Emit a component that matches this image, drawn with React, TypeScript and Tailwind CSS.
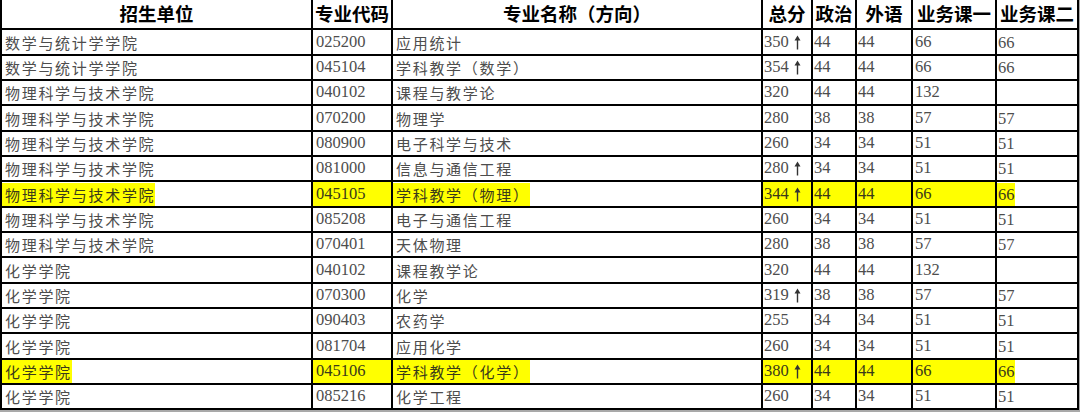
import React from 'react';

type Row = {
  unit: string;
  code: string;
  name: string;
  total: string;
  up?: boolean;
  pol: string;
  lang: string;
  c1: string;
  c2: string;
  hl?: boolean;
};

const rows: Row[] = [
  { unit: '数学与统计学学院', code: '025200', name: '应用统计', total: '350', up: true, pol: '44', lang: '44', c1: '66', c2: '66' },
  { unit: '数学与统计学学院', code: '045104', name: '学科教学（数学）', total: '354', up: true, pol: '44', lang: '44', c1: '66', c2: '66' },
  { unit: '物理科学与技术学院', code: '040102', name: '课程与教学论', total: '320', pol: '44', lang: '44', c1: '132', c2: '' },
  { unit: '物理科学与技术学院', code: '070200', name: '物理学', total: '280', pol: '38', lang: '38', c1: '57', c2: '57' },
  { unit: '物理科学与技术学院', code: '080900', name: '电子科学与技术', total: '260', pol: '34', lang: '34', c1: '51', c2: '51' },
  { unit: '物理科学与技术学院', code: '081000', name: '信息与通信工程', total: '280', up: true, pol: '34', lang: '34', c1: '51', c2: '51' },
  { unit: '物理科学与技术学院', code: '045105', name: '学科教学（物理）', total: '344', up: true, pol: '44', lang: '44', c1: '66', c2: '66', hl: true },
  { unit: '物理科学与技术学院', code: '085208', name: '电子与通信工程', total: '260', pol: '34', lang: '34', c1: '51', c2: '51' },
  { unit: '物理科学与技术学院', code: '070401', name: '天体物理', total: '280', pol: '38', lang: '38', c1: '57', c2: '57' },
  { unit: '化学学院', code: '040102', name: '课程教学论', total: '320', pol: '44', lang: '44', c1: '132', c2: '' },
  { unit: '化学学院', code: '070300', name: '化学', total: '319', up: true, pol: '38', lang: '38', c1: '57', c2: '57' },
  { unit: '化学学院', code: '090403', name: '农药学', total: '255', pol: '34', lang: '34', c1: '51', c2: '51' },
  { unit: '化学学院', code: '081704', name: '应用化学', total: '260', pol: '34', lang: '34', c1: '51', c2: '51' },
  { unit: '化学学院', code: '045106', name: '学科教学（化学）', total: '380', up: true, pol: '44', lang: '44', c1: '66', c2: '66', hl: true },
  { unit: '化学学院', code: '085216', name: '化学工程', total: '260', pol: '34', lang: '34', c1: '51', c2: '51' },
];

// row lines fall about every 25.3px, so rows go 26/25/25
const heights = ['h-[26px]', 'h-[25px]', 'h-[25px]'];

const cjk = "font-['Noto_Sans_CJK_SC',sans-serif]";
const num = "font-['Liberation_Serif','Noto_Sans_CJK_SC',serif]";

function UpArrow() {
  return (
    <svg width="7" height="15" viewBox="0 0 7 15" className="ml-[5px] shrink-0">
      <path d="M3.5 0.5 L6.5 5.5 L4.2 5.5 L4.2 14.5 L2.8 14.5 L2.8 5.5 L0.5 5.5 Z" fill="#333" />
    </svg>
  );
}

export default function App() {
  return (
    <div className="w-[1080px] h-[412px] bg-[#a9a9a9] overflow-hidden">
      <div className="w-[1079px] bg-white">
        <div className={`flex h-[30px] border-b-2 border-black text-[18.5px] font-bold text-black ${cjk}`}>
          <div className="w-[313px] border-x-2 border-black flex items-center justify-center">招生单位</div>
          <div className="w-[80px] border-r-2 border-black flex items-center justify-center">专业代码</div>
          <div className="w-[370px] border-r-2 border-black flex items-center justify-center">专业名称（方向）</div>
          <div className="w-[50px] border-r-2 border-black flex items-center justify-center">总分</div>
          <div className="w-[44px] border-r-2 border-black flex items-center justify-center">政治</div>
          <div className="w-[56px] border-r-2 border-black flex items-center justify-center">外语</div>
          <div className="w-[84px] border-r-2 border-black flex items-center justify-center">业务课一</div>
          <div className="w-[82px] border-r-2 border-black flex items-center justify-center">业务课二</div>
        </div>
        {rows.map((r, i) => {
          const fill = r.hl ? 'bg-[#ffff00] text-[#3a3a1a]' : '';
          const mark = r.hl ? 'bg-[#ffff00] text-[#3a3a1a]' : '';
          return (
            <div key={i} className={`flex ${heights[i % 3]} border-b-2 border-black text-[#4d4d4d]`}>
              <div className="w-[313px] border-x-2 border-black flex items-center">
                <span className={`${mark} ${cjk} text-[15px] tracking-[1.7px] pl-[3px] py-[2px] leading-[19px]`}>
                  {r.unit}
                </span>
              </div>
              <div className={`w-[80px] border-r-2 border-black flex items-center pl-[3px] ${num} text-[16.5px] ${fill}`}>
                {r.code}
              </div>
              <div className="w-[370px] border-r-2 border-black flex items-center">
                <span className={`${mark} ${cjk} text-[15px] tracking-[1.7px] pl-[3px] py-[2px] leading-[19px]`}>
                  {r.name}
                </span>
              </div>
              <div className={`w-[50px] border-r-2 border-black flex items-center pl-[1px] ${num} text-[16.5px] ${fill}`}>
                {r.total}
                {r.up && <UpArrow />}
              </div>
              <div className={`w-[44px] border-r-2 border-black flex items-center pl-[1px] ${num} text-[16.5px] ${fill}`}>
                {r.pol}
              </div>
              <div className={`w-[56px] border-r-2 border-black flex items-center pl-[1px] ${num} text-[16.5px] ${fill}`}>
                {r.lang}
              </div>
              <div className={`w-[84px] border-r-2 border-black flex items-center pl-[2px] ${num} text-[16.5px] ${fill}`}>
                {r.c1}
              </div>
              <div className="w-[82px] border-r-2 border-black flex items-center">
                <span className={`${mark} ${num} text-[16.5px] pl-[1px] py-[2px] leading-[19px]`}>
                  {r.c2}
                </span>
              </div>
            </div>
          );
        })}
      </div>
    </div>
  );
}
